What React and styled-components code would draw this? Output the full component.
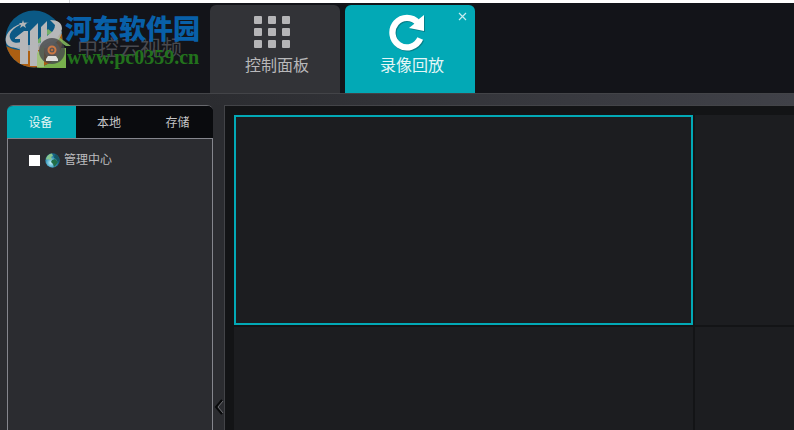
import React, { useState } from "react";
import styled, { createGlobalStyle } from "styled-components";

const GlobalStyle = createGlobalStyle`
  * { box-sizing: border-box; }
  body {
    margin: 0;
    background: #2b2c30;
    font-family: "Liberation Sans", "Noto Sans CJK SC", sans-serif;
  }
  button { font-family: inherit; border: 0; padding: 0; cursor: pointer; }
`;

const Page = styled.div`
  display: flex;
  flex-direction: column;
  height: 100vh;
  overflow: hidden;
`;

const TopStrip = styled.div`
  flex: none;
  width: 70px;
  height: 3px;
  border-right: 1px solid #d4d5d8;
`;

const StripRow = styled.div`
  flex: none;
  background: #fff;
`;

const Header = styled.header`
  flex: none;
  display: flex;
  align-items: flex-end;
  height: 91px;
  background: #131419;
  border-bottom: 1px solid #434448;
`;

const Brand = styled.div`
  position: relative;
  flex: none;
  width: 210px;
  height: 90px;
`;

const Emblem = styled.svg`
  position: absolute;
  left: 4px;
  top: 6px;
  width: 68px;
  height: 62px;
`;

const ProductName = styled.div`
  position: absolute;
  left: 77px;
  top: 32px;
  font-size: 21px;
  line-height: 26px;
  white-space: nowrap;
  color: #48494f;
`;

const SiteName = styled.div`
  position: absolute;
  left: 65px;
  top: 11px;
  font-size: 27px;
  line-height: 32px;
  font-weight: 900;
  white-space: nowrap;
  color: #0860a8;
`;

const SiteAddress = styled.div`
  position: absolute;
  left: 67px;
  top: 43px;
  font-family: "Liberation Serif", serif;
  font-size: 20px;
  line-height: 22px;
  font-weight: bold;
  white-space: nowrap;
  color: #22711c;
`;

const AppTabs = styled.nav`
  display: flex;
  gap: 5px;
`;

const TabSlot = styled.div`
  position: relative;
`;

const AppTab = styled.button`
  display: flex;
  flex-direction: column;
  align-items: center;
  gap: 1px;
  width: 130px;
  height: 88px;
  padding: 8px 0 0 4px;
  border-radius: 6px 6px 0 0;
  background: ${(p) => (p.$active ? "#02a9b6" : "#323337")};
  color: ${(p) => (p.$active ? "#e4f6f7" : "#b8b8ba")};
  font-size: 16px;
  line-height: 24px;

  svg { display: block; flex: none; }
`;

const CloseButton = styled.button`
  position: absolute;
  right: 6px;
  top: 5px;
  width: 13px;
  height: 13px;
  background: none;

  svg { display: block; }
`;

const Body = styled.main`
  flex: 1;
  min-height: 0;
  display: flex;
  padding: 11px 0 0 7px;
  background: linear-gradient(90deg, #2b2c30 25%, #404148);
`;

const Sidebar = styled.aside`
  flex: none;
  display: flex;
  flex-direction: column;
  width: 206px;
`;

const SourceTabs = styled.div`
  flex: none;
  display: grid;
  grid-template-columns: 69px 68px 1fr;
  height: 33px;
  overflow: hidden;
  border-top: 1px solid #68696e;
  border-radius: 6px 6px 0 0;
  background: #0a0b0e;
`;

const SourceTab = styled.button`
  padding: 1px 2px 0 0;
  background: ${(p) => (p.$active ? "#02a9b6" : "#0a0b0e")};
  color: ${(p) => (p.$active ? "#e4f6f7" : "#c4c4c6")};
  font-size: 12px;
  line-height: 20px;
`;

const DevicePanel = styled.div`
  flex: 1;
  padding: 12px 0 0 21px;
  border: 1px solid #85868d;
  border-bottom: 0;
  background: #2b2c30;
`;

const TreeItem = styled.label`
  display: flex;
  align-items: center;
  height: 18px;
  color: #bcbcbf;
  font-size: 12px;
  line-height: 18px;

  svg { flex: none; margin: 0 4px 0 5px; }
`;

const Check = styled.input`
  appearance: none;
  width: 11px;
  height: 11px;
  margin: 0;
  background: #fff;

  &:checked { box-shadow: inset 0 0 0 2px #fff; background: #02a9b6; }
`;

const Collapse = styled.button`
  flex: none;
  width: 11px;
  padding-top: 277px;
  background: #2b2c30;

  svg { display: block; margin-left: 1px; }
`;

const VideoArea = styled.section`
  flex: 1;
  min-width: 0;
  display: grid;
  grid-template-columns: 459px 1fr;
  grid-template-rows: 210px 1fr;
  gap: 2px;
  padding: 9px 0 0 9px;
  border: 1px solid #434448;
  border-width: 1px 0 0 1px;
  background: #131416;
`;

const VideoCell = styled.div`
  background: #1c1d20;
  border: ${(p) => (p.$selected ? "2px solid #02a9b6" : "0")};
`;

function BrandEmblem() {
  return (
    <Emblem viewBox="4 9 68 62" aria-hidden="true">
      <defs>
        <clipPath id="disc"><circle cx="34" cy="39" r="28.5" /></clipPath>
      </defs>
      <path d="M37 48H66V68H37Z" fill="#78b04d" />
      <g clipPath="url(#disc)">
        <rect x="4" y="9" width="60" height="60" fill="#0b5985" />
        <path d="M4 45Q20 54 36 48L63 33V70H4Z" fill="#ac5f12" />
      </g>
      <path d="M32 46L48 29L71 46H66L48 35L37 46Z" fill="#86bd61" opacity=".85" />
      <path d="M40 42L48 34L57 42V46H40Z" fill="#287f87" opacity=".75" />
      <path
        d="M29 22C15 25 8 33 10 38C12 44 18 43 21 42V47C12 49 7 46 6 42C4 32 16 23 29 22Z"
        fill="#b6b7b9"
      />
      <path d="M15 38L24 31H28V64H20V39H15Z" fill="#b6b7b9" />
      <path d="M30 31L38 23V66H30Z" fill="#b6b7b9" />
      <path d="M41 27L47 21V36Q55 31 55 25L50 20Q62 20 62 29Q61 37 48 43L41 46Z" fill="#b6b7b9" />
      <path d="M12 46Q43 47 62 31Q61 43 43 49Q25 54 12 46Z" fill="#b6b7b9" opacity=".85" />
      <path d="M37 53L44 45V67H37Z" fill="#a1c17d" />
      <path d="M23 20L24 23L27 23L25 25L26 28L23 26L20 28L21 25L19 23L22 23Z" fill="#b4b6b8" />
      <circle cx="52" cy="51" r="13" fill="#46474b" opacity=".8" />
      <circle cx="52" cy="50" r="8" fill="#5b5b5d" opacity=".65" />
      <circle cx="52" cy="50" r="3.5" fill="none" stroke="#cc7945" strokeWidth="2" />
      <circle cx="52" cy="50" r="1.2" fill="#bd7040" />
      <path d="M46 59L48 56H56L58 59V61H46Z" fill="#dedfdd" />
    </Emblem>
  );
}

function GridIcon() {
  const columns = [0, 14, 28];
  const rows = [3, 15, 27];
  return (
    <svg width="46" height="40" viewBox="0 0 46 40" aria-hidden="true">
      {rows.map((y) =>
        columns.map((x) => (
          <rect key={`${x}-${y}`} x={x} y={y} width="8" height="8" rx="1" fill="#b5b5b7" />
        ))
      )}
    </svg>
  );
}

function ReplayShape() {
  return (
    <>
      <path d="M29 10A14.5 14.8 0 1 0 31.2 25.6" fill="none" stroke="currentColor" strokeWidth="6.3" />
      <path d="M35 2V18L20 15L25 11L30 6Z" fill="currentColor" />
    </>
  );
}

function ReplayIcon() {
  return (
    <svg width="46" height="40" viewBox="0 0 46 40" aria-hidden="true">
      <g transform="translate(1 1)" color="#077f89"><ReplayShape /></g>
      <g color="#fff"><ReplayShape /></g>
    </svg>
  );
}

function CloseIcon() {
  return (
    <svg width="13" height="13" viewBox="0 0 13 13" aria-hidden="true">
      <path d="M3 3L10 10M10 3L3 10" stroke="#c5edf0" strokeWidth="1.2" />
    </svg>
  );
}

function GlobeIcon() {
  return (
    <svg width="15" height="15" viewBox="0 0 15 15" aria-hidden="true">
      <defs>
        <radialGradient id="ocean" cx="40%" cy="65%">
          <stop offset="0" stopColor="#c4f1f6" />
          <stop offset=".6" stopColor="#4faacb" />
          <stop offset="1" stopColor="#17678c" />
        </radialGradient>
      </defs>
      <circle cx="7.5" cy="7.5" r="7.2" fill="url(#ocean)" />
      <path d="M1 6Q2 1 7 .5L8 3L6 4L7 6L5 7L3 6L2 7Z" fill="#86c58f" />
      <path d="M10 1L13 3L14.5 7L13 9L11 6L9 5Z" fill="#155764" />
      <path d="M7 7L10 6L13 9L11 12L9 14L8 11L6 9Z" fill="#216f48" />
    </svg>
  );
}

const SOURCES = ["设备", "本地", "存储"];

export default function App() {
  const [source, setSource] = useState("设备");
  return (
    <>
      <GlobalStyle />
      <Page>
        <StripRow><TopStrip /></StripRow>
        <Header>
          <Brand>
            <ProductName>中控云视频</ProductName>
            <BrandEmblem />
            <SiteName>河东软件园</SiteName>
            <SiteAddress>www.pc0359.cn</SiteAddress>
          </Brand>
          <AppTabs>
            <AppTab type="button"><GridIcon />控制面板</AppTab>
            <TabSlot>
              <AppTab type="button" $active><ReplayIcon />录像回放</AppTab>
              <CloseButton type="button" aria-label="关闭"><CloseIcon /></CloseButton>
            </TabSlot>
          </AppTabs>
        </Header>
        <Body>
          <Sidebar>
            <SourceTabs>
              {SOURCES.map((name) => (
                <SourceTab key={name} type="button" $active={name === source} onClick={() => setSource(name)}>
                  {name}
                </SourceTab>
              ))}
            </SourceTabs>
            <DevicePanel>
              <TreeItem><Check type="checkbox" /><GlobeIcon />管理中心</TreeItem>
            </DevicePanel>
          </Sidebar>
          <Collapse type="button" aria-label="收起">
            <svg width="10" height="50" viewBox="0 0 10 50" aria-hidden="true">
              <path d="M8 18L2 25L8 32" fill="none" stroke="#08090a" strokeWidth="2" />
              <path d="M9 19L4 25L9 31" fill="none" stroke="#6a6b6f" strokeWidth="1" />
            </svg>
          </Collapse>
          <VideoArea>
            <VideoCell $selected />
            <VideoCell />
            <VideoCell />
            <VideoCell />
          </VideoArea>
        </Body>
      </Page>
    </>
  );
}
